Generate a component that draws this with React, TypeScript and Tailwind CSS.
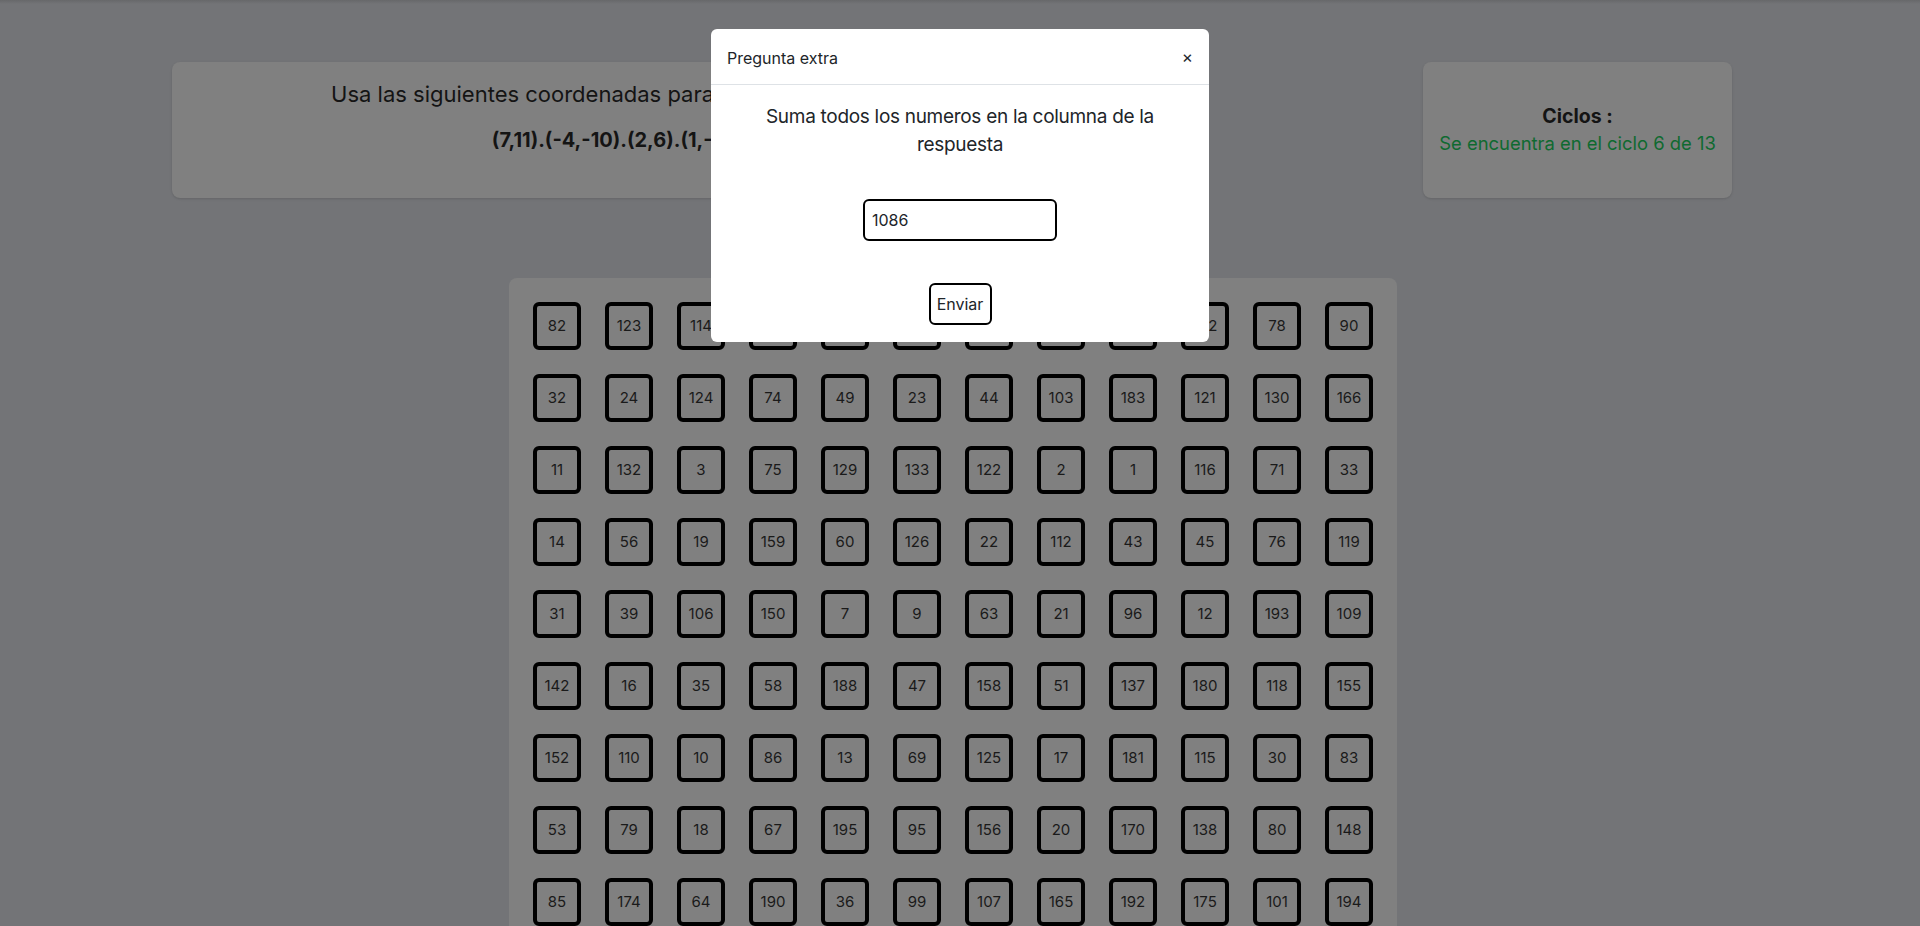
import React from "react";

const rows: number[][] = [
  [82, 123, 114, 171, 8, 97, 140, 62, 27, 102, 78, 90],
  [32, 24, 124, 74, 49, 23, 44, 103, 183, 121, 130, 166],
  [11, 132, 3, 75, 129, 133, 122, 2, 1, 116, 71, 33],
  [14, 56, 19, 159, 60, 126, 22, 112, 43, 45, 76, 119],
  [31, 39, 106, 150, 7, 9, 63, 21, 96, 12, 193, 109],
  [142, 16, 35, 58, 188, 47, 158, 51, 137, 180, 118, 155],
  [152, 110, 10, 86, 13, 69, 125, 17, 181, 115, 30, 83],
  [53, 79, 18, 67, 195, 95, 156, 20, 170, 138, 80, 148],
  [85, 174, 64, 190, 36, 99, 107, 165, 192, 175, 101, 194],
];

export default function App() {
  return (
    <div
      className="relative h-[926px] w-full overflow-hidden bg-[#737477]"
      style={{ fontFamily: "Inter, 'Noto Sans', sans-serif" }}
    >
      <div className="h-[4px] w-full bg-linear-to-b from-[#67686a] to-[#737477]" />

      {/* top cards */}
      <div className="mt-[58px] flex items-start">
        <div className="ml-[172px] flex h-[136px] w-[941px] flex-col items-center rounded-lg bg-[#808080] px-4 pt-4 shadow-sm">
          <p className="whitespace-nowrap text-[22px] leading-[33px] text-[#141414]">
            Usa las siguientes coordenadas para encontrar la respuesta
          </p>
          <p className="mt-4 whitespace-nowrap text-[20px] font-bold leading-[27px] text-[#141414]">
            (7,11).(-4,-10).(2,6).(1,-3).(5,12)
          </p>
        </div>
        <div className="ml-[310px] flex h-[136px] w-[309px] flex-col items-center justify-center rounded-lg bg-[#808080] shadow-sm">
          <p className="text-[19.5px] font-bold leading-[27px] text-[#141414]">Ciclos :</p>
          <p className="text-[18.4px] leading-[27px] text-[#0f6a30]">Se encuentra en el ciclo 6 de 13</p>
        </div>
      </div>

      {/* grid panel */}
      <div className="ml-[509px] mt-[80px] w-[888px] rounded-lg bg-[#808080] p-[24px]">
        <div className="flex flex-col gap-[24px]">
          {rows.map((r, i) => (
            <div key={i} className="flex gap-[24px]">
              {r.map((n, j) => (
                <div
                  key={j}
                  className="flex h-[48px] w-[48px] items-center justify-center rounded-[6px] border-[4px] border-black text-[15px] text-[#1a1a1a]"
                >
                  {n}
                </div>
              ))}
            </div>
          ))}
        </div>
      </div>

      {/* modal */}
      <div className="absolute inset-0 flex justify-center">
        <div className="mt-[29px] h-fit w-[498px] rounded-md bg-white">
          <div className="flex h-[56px] items-center justify-between border-b border-[#dee2e6] px-4 pt-[2px]">
            <span className="text-[16px] leading-[24px] text-[#212529]">Pregunta extra</span>
            <span className="text-[17px] leading-none text-[#212529]">×</span>
          </div>
          <div className="flex flex-col items-center px-4 pt-[18px] pb-[17px]">
            <p className="text-center text-[19px] leading-[28px] tracking-[-0.3px] text-[#212529]">
              Suma todos los numeros en la columna de la respuesta
            </p>
            <input
              readOnly
              value="1086"
              className="mt-[40px] h-[42px] w-[194px] rounded-md border-2 border-black px-[7px] text-[16px] text-[#212529] outline-none"
            />
            <button className="mt-[42px] h-[42px] w-[63px] rounded-md border-2 border-black bg-white text-[16px] text-[#212529]">
              Enviar
            </button>
          </div>
        </div>
      </div>
    </div>
  );
}
